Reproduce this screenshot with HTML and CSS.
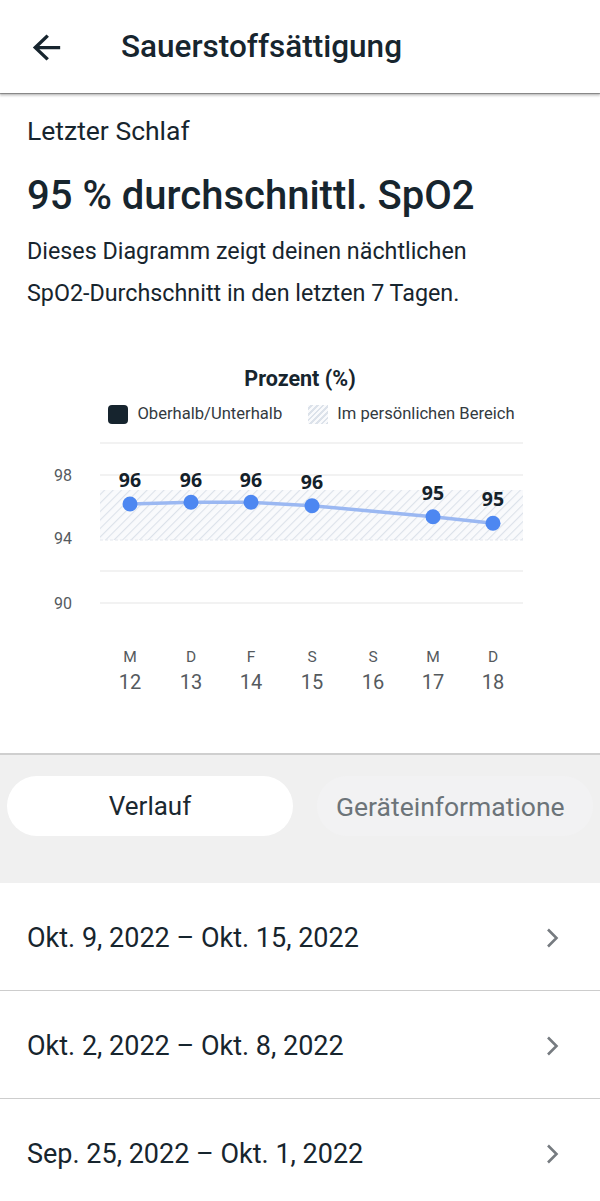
FILE: index.html
```html
<!DOCTYPE html>
<html lang="de">
<head>
<meta charset="utf-8">
<title>Sauerstoffsättigung</title>
<link rel="stylesheet" href="styles.css">
</head>
<body>
<header class="appbar">
  <svg class="back" width="41" height="39" viewBox="0 0 24 24" preserveAspectRatio="none" aria-hidden="true">
    <path d="M20 11H7.83l5.59-5.59L12 4l-8 8 8 8 1.41-1.41L7.83 13H20v-2z" fill="#17252e"/>
  </svg>
  <h1 class="appbar-title">Sauerstoffsättigung</h1>
</header>

<section class="summary">
  <div class="sub">Letzter Schlaf</div>
  <h2 class="big">95 % durchschnittl. SpO2</h2>
  <p class="desc">Dieses Diagramm zeigt deinen nächtlichen SpO2-Durchschnitt in den letzten 7 Tagen.</p>
</section>

<section class="chart">
  <div class="chart-title">Prozent (%)</div>
  <div class="legend">
    <span class="legend-item"><span class="swatch swatch-dark"></span>Oberhalb/Unterhalb</span>
    <span class="legend-item"><span class="swatch swatch-hatch"></span>Im persönlichen Bereich</span>
  </div>
  <svg class="plot" width="600" height="323" viewBox="0 430 600 323">
    <defs>
      <pattern id="hatch" patternUnits="userSpaceOnUse" width="6" height="6" patternTransform="rotate(45)">
        <rect width="6" height="6" fill="#f9fafc"/>
        <line x1="0" y1="0" x2="0" y2="6" stroke="#dce2ea" stroke-width="2.2"/>
      </pattern>
    </defs>
    <g stroke="#eeeeee" stroke-width="1.5">
      <line x1="100" y1="443" x2="523" y2="443"/>
      <line x1="100" y1="475" x2="523" y2="475"/>
      <line x1="100" y1="571" x2="523" y2="571"/>
      <line x1="100" y1="603" x2="523" y2="603"/>
    </g>
    <rect x="100" y="490" width="423" height="50" fill="url(#hatch)"/>
    <line x1="100" y1="540" x2="523" y2="540" stroke="#e4e8ee" stroke-width="1" stroke-dasharray="3 2"/>
    <g class="ylab">
      <text x="63" y="481">98</text>
      <text x="63" y="544">94</text>
      <text x="63" y="609">90</text>
    </g>
    <polyline points="130,504 191,502.3 251,502.3 312,505.7 433,516.7 493,523.3" fill="none" stroke="#9bb8f2" stroke-width="3.5" stroke-linejoin="round"/>
    <g fill="#4d87f1">
      <circle cx="130" cy="504" r="7.5"/>
      <circle cx="191" cy="502.3" r="7.5"/>
      <circle cx="251" cy="502.3" r="7.5"/>
      <circle cx="312" cy="505.7" r="7.5"/>
      <circle cx="433" cy="516.7" r="7.5"/>
      <circle cx="493" cy="523.3" r="7.5"/>
    </g>
    <g class="vlab">
      <text x="130" y="487">96</text>
      <text x="191" y="487">96</text>
      <text x="251" y="487">96</text>
      <text x="312" y="489">96</text>
      <text x="433" y="500">95</text>
      <text x="493" y="506">95</text>
    </g>
    <g class="xday">
      <text x="130" y="662">M</text>
      <text x="191" y="662">D</text>
      <text x="251" y="662">F</text>
      <text x="312" y="662">S</text>
      <text x="373" y="662">S</text>
      <text x="433" y="662">M</text>
      <text x="493" y="662">D</text>
    </g>
    <g class="xnum">
      <text x="130" y="689">12</text>
      <text x="191" y="689">13</text>
      <text x="251" y="689">14</text>
      <text x="312" y="689">15</text>
      <text x="373" y="689">16</text>
      <text x="433" y="689">17</text>
      <text x="493" y="689">18</text>
    </g>
  </svg>
</section>

<section class="tabs">
  <div class="tab tab-active">Verlauf</div>
  <div class="tab tab-idle">Geräteinformatione</div>
</section>

<ul class="weeks">
  <li class="week"><span>Okt. 9, 2022 – Okt. 15, 2022</span><svg class="chev" width="14" height="20" viewBox="0 0 14 20"><polyline points="2,1.5 10.5,10 2,18.5" fill="none" stroke="#767b80" stroke-width="2.6"/></svg></li>
  <li class="week"><span>Okt. 2, 2022 – Okt. 8, 2022</span><svg class="chev" width="14" height="20" viewBox="0 0 14 20"><polyline points="2,1.5 10.5,10 2,18.5" fill="none" stroke="#767b80" stroke-width="2.6"/></svg></li>
  <li class="week"><span>Sep. 25, 2022 – Okt. 1, 2022</span><svg class="chev" width="14" height="20" viewBox="0 0 14 20"><polyline points="2,1.5 10.5,10 2,18.5" fill="none" stroke="#767b80" stroke-width="2.6"/></svg></li>
</ul>
</body>
</html>
```

FILE: styles.css
```css
* { box-sizing: border-box; }
html, body {
  margin: 0;
  padding: 0;
  background: #ffffff;
  font-family: Roboto, "Liberation Sans", sans-serif;
  color: #17252e;
  overflow: hidden;
}
.appbar {
  height: 93px;
  display: flex;
  align-items: center;
  padding-left: 26px;
  background: #fff;
  box-shadow: 0 1px 1px rgba(0,0,0,0.35), 0 3px 2px rgba(0,0,0,0.18);
  position: relative;
  z-index: 1;
}
.back { display: block; margin-top: 2px; }
.appbar-title {
  margin: 0 0 0 54px;
  font-size: 31.5px;
  font-weight: 500;
  letter-spacing: 0;
}
.summary {
  padding: 23px 27px 0;
}
.sub {
  font-size: 26.5px;
  line-height: 30px;
  font-weight: 400;
}
.big {
  margin: 25px 0 0;
  font-size: 40px;
  line-height: 50px;
  font-weight: 500;
}
.desc {
  margin: 9px 0 0;
  font-size: 23.3px;
  line-height: 42px;
  max-width: 490px;
}
.chart {
  margin-top: 53px;
  border-bottom: 2px solid #cfcfcf;
}
.chart-title {
  text-align: center;
  font-size: 21.5px;
  line-height: 24px;
  font-weight: 700;
}
.legend {
  margin-top: 13px;
  display: flex;
  justify-content: center;
  gap: 26px;
  padding-left: 23px;
  font-size: 16.6px;
  line-height: 20px;
  color: #333a3f;
}
.legend-item { display: flex; align-items: center; gap: 9px; }
.swatch { width: 20px; height: 19px; border-radius: 4px; display: inline-block; }
.swatch-dark { background: #16242e; }
.swatch-hatch {
  border-radius: 0;
  background: repeating-linear-gradient(135deg, #f9fafc 0 2px, #dce2ea 2px 4px);
}
.plot { display: block; margin-top: 6px; }
.ylab text {
  font-family: Roboto, sans-serif;
  font-size: 16px;
  fill: #555a5e;
  text-anchor: middle;
}
.vlab text {
  font-family: "Open Sans", Roboto, sans-serif;
  font-weight: 700;
  font-size: 19.5px;
  fill: #14212a;
  text-anchor: middle;
}
.xday text {
  font-family: Roboto, sans-serif;
  font-size: 15.5px;
  fill: #555a5e;
  text-anchor: middle;
}
.xnum text {
  font-family: Roboto, sans-serif;
  font-size: 20px;
  fill: #555a5e;
  text-anchor: middle;
}
.tabs {
  background: #f0f0f0;
  height: 128px;
  padding: 21px 7px 0;
  display: flex;
  gap: 24px;
  align-items: flex-start;
}
.tab {
  height: 60px;
  border-radius: 30px;
  display: flex;
  align-items: center;
  justify-content: center;
  font-size: 26px;
  white-space: nowrap;
  overflow: hidden;
}
.tab-active {
  width: 286px;
  background: #fff;
  color: #1b2830;
}
.tab-idle {
  width: 276px;
  background: #f2f2f3;
  color: #6c7479;
  justify-content: flex-start;
  padding-left: 19px;
  font-size: 26.5px;
}
.weeks {
  list-style: none;
  margin: 0;
  padding: 0;
}
.week {
  height: 108px;
  border-bottom: 1.5px solid #cdcdcd;
  display: flex;
  align-items: center;
  justify-content: space-between;
  padding: 2px 40px 0 27px;
  font-size: 27px;
  color: #17252e;
}
.chev { display: block; }
```
